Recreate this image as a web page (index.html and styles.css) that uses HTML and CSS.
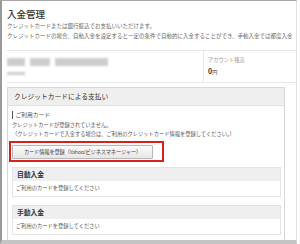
FILE: index.html
```html
<!DOCTYPE html>
<html lang="ja">
<head>
    <meta charset="UTF-8">
    <title>入金管理</title>
    <link rel="stylesheet" href="styles.css">
</head>
<body>
    <div class="frame">
        <div class="page">
            <h1 class="title">入金管理</h1>
            <p class="intro">クレジットカードまたは銀行振込でお支払いいただけます。</p>
            <p class="intro">クレジットカードの場合、自動入金を設定すると一定の条件で自動的に入金することができ、手動入金では都度入金</p>

            <!-- account summary -->
            <div class="account">
                <div class="account-name">
                    <div class="blur-row">
                        <span class="blur" style="width:18px"></span>
                        <span class="blur" style="width:20px"></span>
                        <span class="blur" style="width:53px"></span>
                    </div>
                    <div class="blur-row small">
                        <span class="blur" style="width:18px"></span>
                    </div>
                </div>
                <div class="balance">
                    <div class="balance-label">アカウント残高</div>
                    <div class="balance-value">0<span>円</span></div>
                </div>
            </div>

            <!-- credit card panel -->
            <div class="panel">
                <div class="panel-head">クレジットカードによる支払い</div>
                <div class="panel-body">
                    <div class="label">ご利用カード</div>
                    <p class="note first">クレジットカードが登録されていません。</p>
                    <p class="note">（クレジットカードで入金する場合は、ご利用のクレジットカード情報を登録してください。）</p>
                    <div class="highlight">
                        <button class="btn">カード情報を登録（Yahoo!ビジネスマネージャー）</button>
                    </div>

                    <div class="sub">
                        <div class="sub-head">自動入金</div>
                        <div class="sub-body">ご利用のカードを登録してください</div>
                    </div>
                    <div class="sub second">
                        <div class="sub-head">手動入金</div>
                        <div class="sub-body">ご利用のカードを登録してください</div>
                    </div>
                </div>
            </div>
        </div>
    </div>
</body>
</html>
```

FILE: styles.css
```css
html, body {
    margin: 0;
    background: #fff;
}
body {
    font-family: "Noto Sans CJK JP", "Noto Sans", sans-serif;
    color: #555;
}
.frame {
    width: 294px;
    height: 239px;
    border-top: 1px solid #a8a8a8;
    border-left: 2px solid #9a9a9a;
    border-right: 1px solid #e2e2e2;
    border-bottom: 4px solid #c4c4c4;
    overflow: hidden;
}
.page {
    padding-left: 5px;
}
.title {
    margin: 7px 0 0;
    font-size: 9.5px;
    line-height: 12px;
    font-weight: 500;
    color: #333;
}
.intro {
    margin: 0;
    font-size: 5.5px;
    line-height: 10px;
    white-space: nowrap;
    overflow: hidden;
    color: #666;
}
.title + .intro {
    margin-top: 1px;
}
.account {
    display: flex;
    margin-top: 9px;
    height: 31px;
    border-top: 1px solid #e8e8e8;
    border-bottom: 1px solid #e8e8e8;
}
.account-name {
    width: 196px;
    padding-top: 7px;
}
.blur-row {
    display: flex;
    gap: 5px;
    height: 8px;
}
.blur-row.small {
    margin-top: 6px;
    height: 3px;
}
.blur {
    display: block;
    background: #cdcdcd;
    filter: blur(1px);
}
.balance {
    border-left: 1px solid #e8e8e8;
    padding: 5px 0 0 4px;
}
.balance-label {
    font-size: 5.25px;
    line-height: 8px;
    color: #999;
}
.balance-value {
    margin-top: 2px;
    font-size: 7px;
    line-height: 10px;
    font-weight: bold;
    color: #333;
}
.balance-value span {
    font-size: 5px;
    font-weight: normal;
}
.panel {
    margin-top: 4px;
    width: 276px;
    border: 1px solid #d8d8d8;
}
.panel-head {
    height: 17px;
    line-height: 17px;
    padding-left: 6px;
    background: #efefef;
    border-bottom: 1px solid #e0e0e0;
    font-size: 6.75px;
    color: #333;
}
.panel-body {
    padding: 5px 3px 5px 4px;
}
.label {
    padding-left: 2.5px;
    border-left: 1px solid #555;
    font-size: 5.75px;
    line-height: 8px;
    color: #555;
}
.note {
    margin: 0;
    font-size: 5.25px;
    line-height: 9px;
    white-space: nowrap;
    color: #555;
}
.note.first {
    margin-top: 1.5px;
}
.highlight {
    display: block;
    width: fit-content;
    margin: 2.5px 0 0 -3px;
    padding: 2px 9px 1px 1px;
    border: 2px solid #d5221b;
}
.btn {
    display: block;
    width: 141px;
    height: 14px;
    padding: 0;
    border: 1px solid #b8b8b8;
    border-radius: 1px;
    background: linear-gradient(#fbfbfb, #e7e7e7);
    font-family: inherit;
    font-size: 5.25px;
    letter-spacing: -0.15px;
    color: #444;
}
.sub {
    margin-top: 5px;
    border: 1px solid #e4e4e4;
}
.sub.second {
    margin-top: 8px;
}
.sub-head {
    height: 13px;
    line-height: 13px;
    padding-left: 4px;
    background: #efefef;
    font-size: 6.75px;
    font-weight: bold;
    color: #333;
}
.sub-body {
    height: 15px;
    line-height: 15px;
    padding-left: 3px;
    font-size: 5.25px;
    color: #555;
}
```
